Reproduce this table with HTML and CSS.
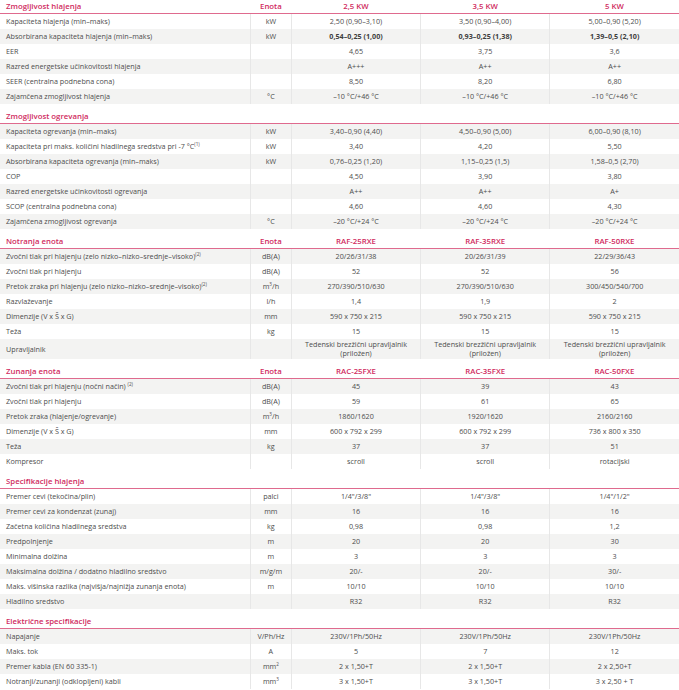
FILE: index.html
```html
<!DOCTYPE html>
<html lang="sl">
<head>
<meta charset="utf-8">
<title>Specifikacije</title>
<link rel="stylesheet" href="styles.css">
</head>
<body>
<div class="sheet">

<table class="spec">
  <colgroup><col class="c-label"><col class="c-unit"><col class="c-val"><col class="c-val"><col class="c-val"></colgroup>
  <thead><tr><th class="label">Zmogljivost hlajenja</th><th>Enota</th><th>2,5 KW</th><th>3,5 KW</th><th>5 KW</th></tr></thead>
  <tbody>
    <tr><td class="label">Kapaciteta hlajenja (min–maks)</td><td>kW</td><td>2,50 (0,90–3,10)</td><td>3,50 (0,90–4,00)</td><td>5,00–0,90 (5,20)</td></tr>
    <tr class="alt"><td class="label">Absorbirana kapaciteta hlajenja (min–maks)</td><td>kW</td><td class="strong">0,54–0,25 (1,00)</td><td class="strong">0,93–0,25 (1,38)</td><td class="strong">1,39–0,5 (2,10)</td></tr>
    <tr><td class="label">EER</td><td></td><td>4,65</td><td>3,75</td><td>3,6</td></tr>
    <tr class="alt"><td class="label">Razred energetske učinkovitosti hlajenja</td><td></td><td>A+++</td><td>A++</td><td>A++</td></tr>
    <tr><td class="label">SEER (centralna podnebna cona)</td><td></td><td>8,50</td><td>8,20</td><td>6,80</td></tr>
    <tr class="alt"><td class="label">Zajamčena zmogljivost hlajenja</td><td>°C</td><td>–10 °C/+46 °C</td><td>–10 °C/+46 °C</td><td>–10 °C/+46 °C</td></tr>
  </tbody>
</table>

<table class="spec">
  <colgroup><col class="c-label"><col class="c-unit"><col class="c-val"><col class="c-val"><col class="c-val"></colgroup>
  <thead><tr><th class="label">Zmogljivost ogrevanja</th><th></th><th></th><th></th><th></th></tr></thead>
  <tbody>
    <tr class="alt"><td class="label">Kapaciteta ogrevanja (min–maks)</td><td>kW</td><td>3,40–0,90 (4,40)</td><td>4,50–0,90 (5,00)</td><td>6,00–0,90 (8,10)</td></tr>
    <tr><td class="label">Kapaciteta pri maks. količini hladilnega sredstva pri -7 °C<sup>(1)</sup></td><td>kW</td><td>3,40</td><td>4,20</td><td>5,50</td></tr>
    <tr class="alt"><td class="label">Absorbirana kapaciteta ogrevanja (min–maks)</td><td>kW</td><td>0,76–0,25 (1,20)</td><td>1,15–0,25 (1,5)</td><td>1,58–0,5 (2,70)</td></tr>
    <tr><td class="label">COP</td><td></td><td>4,50</td><td>3,90</td><td>3,80</td></tr>
    <tr class="alt"><td class="label">Razred energetske učinkovitosti ogrevanja</td><td></td><td>A++</td><td>A++</td><td>A+</td></tr>
    <tr><td class="label">SCOP (centralna podnebna cona)</td><td></td><td>4,60</td><td>4,60</td><td>4,30</td></tr>
    <tr class="alt"><td class="label">Zajamčena zmogljivost ogrevanja</td><td>°C</td><td>–20 °C/+24 °C</td><td>–20 °C/+24 °C</td><td>–20 °C/+24 °C</td></tr>
  </tbody>
</table>

<table class="spec">
  <colgroup><col class="c-label"><col class="c-unit"><col class="c-val"><col class="c-val"><col class="c-val"></colgroup>
  <thead><tr><th class="label">Notranja enota</th><th>Enota</th><th>RAF-25RXE</th><th>RAF-35RXE</th><th>RAF-50RXE</th></tr></thead>
  <tbody>
    <tr class="alt"><td class="label">Zvočni tlak pri hlajenju (zelo nizko–nizko–srednje–visoko)<sup>(2)</sup></td><td>dB(A)</td><td>20/26/31/38</td><td>20/26/31/39</td><td>22/29/36/43</td></tr>
    <tr><td class="label">Zvočni tlak pri hlajenju</td><td>dB(A)</td><td>52</td><td>52</td><td>56</td></tr>
    <tr class="alt"><td class="label">Pretok zraka pri hlajenju (zelo nizko–nizko–srednje–visoko)<sup>(2)</sup></td><td>m<sup>3</sup>/h</td><td>270/390/510/630</td><td>270/390/510/630</td><td>300/450/540/700</td></tr>
    <tr><td class="label">Razvlaževanje</td><td>l/h</td><td>1,4</td><td>1,9</td><td>2</td></tr>
    <tr class="alt"><td class="label">Dimenzije (V x Š x G)</td><td>mm</td><td>590 x 750 x 215</td><td>590 x 750 x 215</td><td>590 x 750 x 215</td></tr>
    <tr><td class="label">Teža</td><td>kg</td><td>15</td><td>15</td><td>15</td></tr>
    <tr class="alt tall"><td class="label">Upravljalnik</td><td></td><td>Tedenski brezžični upravljalnik<br>(priložen)</td><td>Tedenski brezžični upravljalnik<br>(priložen)</td><td>Tedenski brezžični upravljalnik<br>(priložen)</td></tr>
  </tbody>
</table>

<table class="spec">
  <colgroup><col class="c-label"><col class="c-unit"><col class="c-val"><col class="c-val"><col class="c-val"></colgroup>
  <thead><tr><th class="label">Zunanja enota</th><th>Enota</th><th>RAC-25FXE</th><th>RAC-35FXE</th><th>RAC-50FXE</th></tr></thead>
  <tbody>
    <tr class="alt"><td class="label">Zvočni tlak pri hlajenju (nočni način) <sup>(2)</sup></td><td>dB(A)</td><td>45</td><td>39</td><td>43</td></tr>
    <tr><td class="label">Zvočni tlak pri hlajenju</td><td>dB(A)</td><td>59</td><td>61</td><td>65</td></tr>
    <tr class="alt"><td class="label">Pretok zraka (hlajenje/ogrevanje)</td><td>m<sup>3</sup>/h</td><td>1860/1620</td><td>1920/1620</td><td>2160/2160</td></tr>
    <tr><td class="label">Dimenzije (V x Š x G)</td><td>mm</td><td>600 x 792 x 299</td><td>600 x 792 x 299</td><td>736 x 800 x 350</td></tr>
    <tr class="alt"><td class="label">Teža</td><td>kg</td><td>37</td><td>37</td><td>51</td></tr>
    <tr><td class="label">Kompresor</td><td></td><td>scroll</td><td>scroll</td><td>rotacijski</td></tr>
  </tbody>
</table>

<table class="spec">
  <colgroup><col class="c-label"><col class="c-unit"><col class="c-val"><col class="c-val"><col class="c-val"></colgroup>
  <thead><tr><th class="label">Specifikacije hlajenja</th><th></th><th></th><th></th><th></th></tr></thead>
  <tbody>
    <tr><td class="label">Premer cevi (tekočina/plin)</td><td>palci</td><td>1/4"/3/8"</td><td>1/4"/3/8"</td><td>1/4"/1/2"</td></tr>
    <tr class="alt"><td class="label">Premer cevi za kondenzat (zunaj)</td><td>mm</td><td>16</td><td>16</td><td>16</td></tr>
    <tr><td class="label">Začetna količina hladilnega sredstva</td><td>kg</td><td>0,98</td><td>0,98</td><td>1,2</td></tr>
    <tr class="alt"><td class="label">Predpolnjenje</td><td>m</td><td>20</td><td>20</td><td>30</td></tr>
    <tr><td class="label">Minimalna dolžina</td><td>m</td><td>3</td><td>3</td><td>3</td></tr>
    <tr class="alt"><td class="label">Maksimalna dolžina / dodatno hladilno sredstvo</td><td>m/g/m</td><td>20/-</td><td>20/-</td><td>30/-</td></tr>
    <tr><td class="label">Maks. višinska razlika (najvišja/najnižja zunanja enota)</td><td>m</td><td>10/10</td><td>10/10</td><td>10/10</td></tr>
    <tr class="alt"><td class="label">Hladilno sredstvo</td><td></td><td>R32</td><td>R32</td><td>R32</td></tr>
  </tbody>
</table>

<table class="spec">
  <colgroup><col class="c-label"><col class="c-unit"><col class="c-val"><col class="c-val"><col class="c-val"></colgroup>
  <thead><tr><th class="label">Električne specifikacije</th><th></th><th></th><th></th><th></th></tr></thead>
  <tbody>
    <tr class="alt"><td class="label">Napajanje</td><td>V/Ph/Hz</td><td>230V/1Ph/50Hz</td><td>230V/1Ph/50Hz</td><td>230V/1Ph/50Hz</td></tr>
    <tr><td class="label">Maks. tok</td><td>A</td><td>5</td><td>7</td><td>12</td></tr>
    <tr class="alt"><td class="label">Premer kabla (EN 60 335-1)</td><td>mm<sup>2</sup></td><td>2 x 1,50+T</td><td>2 x 1,50+T</td><td>2 x 2,50+T</td></tr>
    <tr><td class="label">Notranji/zunanji (odklopljeni) kabli</td><td>mm<sup>3</sup></td><td>3 x 1,50+T</td><td>3 x 1,50+T</td><td>3 x 2,50 + T</td></tr>
  </tbody>
</table>

</div>
</body>
</html>
```

FILE: styles.css
```css
html, body {
  margin: 0;
  padding: 0;
  background: #ffffff;
}

body {
  font-family: "Open Sans", "Liberation Sans", sans-serif;
  color: #4d4d4d;
}

.sheet {
  width: 679px;
  display: flex;
  flex-direction: column;
  gap: 6px;
}

.spec {
  width: 679px;
  border-collapse: collapse;
  table-layout: fixed;
}

.c-label { width: 250px; }
.c-unit { width: 41px; }
.c-val { width: 129px; }

.spec th {
  height: 13px;
  padding: 0;
  font-size: 7.8px;
  line-height: 13px;
  font-weight: 600;
  color: #d02a5e;
  text-align: center;
  white-space: nowrap;
  border-bottom: 1px solid #df6a8e;
}

.spec th.label {
  text-align: left;
  padding-left: 6px;
}

.spec td {
  height: 15px;
  padding: 0;
  font-size: 7.2px;
  line-height: 15px;
  text-align: center;
  white-space: nowrap;
  border-left: 1px solid #e7e7e7;
}

.spec td.label {
  text-align: left;
  padding-left: 6px;
  border-left: none;
}

.spec td.strong {
  font-weight: 700;
  color: #3e3e3e;
}

.spec tr.alt td {
  background: #f3f3f2;
}

.spec tr.tall td {
  height: 20px;
  line-height: 9px;
}

.spec sup {
  font-size: 4.6px;
  line-height: 0;
  vertical-align: 3px;
}
```
